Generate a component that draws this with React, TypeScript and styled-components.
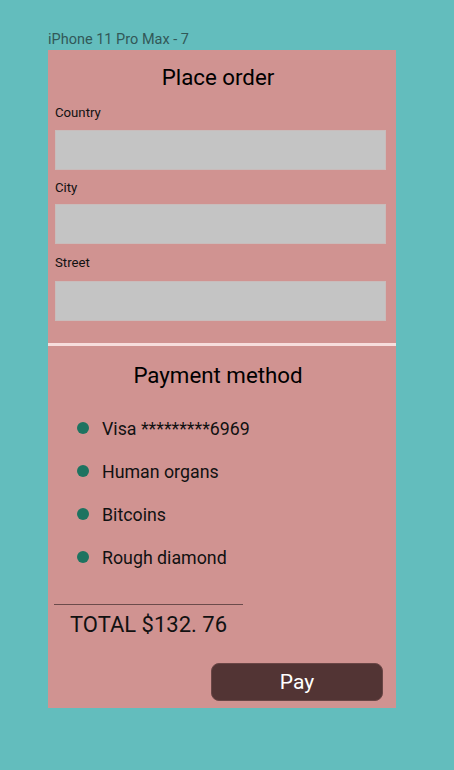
import * as React from 'react'
import styled, { createGlobalStyle } from 'styled-components'

const GlobalStyle = createGlobalStyle`
  html, body {
    margin: 0;
    padding: 0;
    background: #63bdbd;
    font-family: Roboto, "Liberation Sans", sans-serif;
  }
`

const Screen = styled.div`
  padding: 31px 0 0 48px;
  min-height: 770px;
  box-sizing: border-box;
`

const FrameName = styled.div`
  font-size: 14.5px;
  line-height: 17px;
  color: #325858;
  height: 19px;
`

const Frame = styled.div`
  width: 348px;
  height: 658px;
  background: #d09391;
  display: flex;
  flex-direction: column;
`

const Title = styled.h1<{ $top: number }>`
  margin: ${p => p.$top}px 0 0;
  font-size: 22.3px;
  font-weight: 400;
  line-height: 26px;
  color: #000;
  text-align: center;
  padding-right: 8px;
`

const Form = styled.div`
  display: flex;
  flex-direction: column;
  padding: 0 10px 0 7px;
`

const Label = styled.label<{ $top: number }>`
  display: block;
  margin-top: ${p => p.$top}px;
  font-size: 13.2px;
  line-height: 16px;
  color: #111;
`

const Input = styled.input<{ $top: number }>`
  display: block;
  margin-top: ${p => p.$top}px;
  height: 40px;
  width: 100%;
  box-sizing: border-box;
  background: #c4c4c4;
  border: 1px solid #c9bcbb;
  outline: none;
`

const Divider = styled.hr`
  margin: 22px 0 0;
  border: none;
  height: 3px;
  background: #f7dedd;
`

const Methods = styled.ul`
  list-style: none;
  margin: 28px 0 0;
  padding: 0 0 0 29px;
  display: flex;
  flex-direction: column;
  gap: 19px;
`

const Method = styled.li`
  display: flex;
  align-items: center;
  height: 24px;
  gap: 13px;
  font-size: 17.8px;
  color: #111;
`

const Dot = styled.span`
  width: 12px;
  height: 12px;
  border-radius: 50%;
  background: #1d7360;
  flex: none;
`

const Rule = styled.div`
  margin: 35px 0 0 6px;
  width: 189px;
  height: 1px;
  background: #6b4b4b;
`

const Total = styled.div`
  margin: 7px 0 0 22px;
  font-size: 22px;
  line-height: 26px;
  color: #111;
`

const PayButton = styled.button`
  align-self: flex-end;
  margin: 25px 13px 0 0;
  width: 172px;
  height: 38px;
  border: 1px solid #6a4646;
  border-radius: 8px;
  background: #523434;
  color: #fff;
  font-family: inherit;
  font-size: 21px;
  cursor: pointer;
`

const methods = ['Visa *********6969', 'Human organs', 'Bitcoins', 'Rough diamond']

export default function App() {
  return (
    <>
      <GlobalStyle />
      <Screen>
        <FrameName>iPhone 11 Pro Max - 7</FrameName>
        <Frame>
          <Title $top={14}>Place order</Title>
          <Form>
            <Label $top={15}>Country</Label>
            <Input $top={9} />
            <Label $top={10}>City</Label>
            <Input $top={8} />
            <Label $top={11}>Street</Label>
            <Input $top={10} />
          </Form>
          <Divider />
          <Title $top={16}>Payment method</Title>
          <Methods>
            {methods.map(m => (
              <Method key={m}>
                <Dot />
                {m}
              </Method>
            ))}
          </Methods>
          <Rule />
          <Total>TOTAL $132. 76</Total>
          <PayButton>Pay</PayButton>
        </Frame>
      </Screen>
    </>
  )
}
